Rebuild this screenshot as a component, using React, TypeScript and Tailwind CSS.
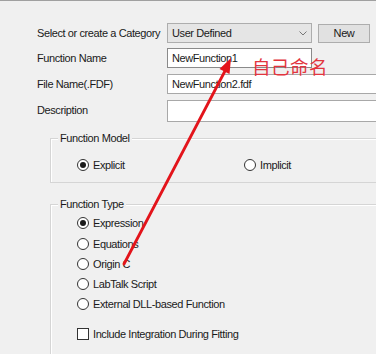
import React from "react";

const font = { fontFamily: '"Liberation Sans", Arial, sans-serif' };

function Radio({ checked, label }: { checked?: boolean; label: string }) {
  return (
    <div className="flex items-center h-[20px]">
      <span className="w-[12px] h-[12px] rounded-full border border-[#333333] bg-white flex items-center justify-center shrink-0">
        {checked && <span className="w-[6px] h-[6px] rounded-full bg-[#1a1a1a]" />}
      </span>
      <span className="ml-[4px] text-[11px] tracking-[-0.4px] text-[#1a1a1a] whitespace-nowrap">{label}</span>
    </div>
  );
}

export default function App() {
  return (
    <div
      className="relative w-[376px] h-[354px] overflow-hidden bg-[#f0f0f0] border-t border-[#a0a0a0]"
      style={font}
    >
      <div className="pt-[22px] flex flex-col text-[11px] tracking-[-0.4px] text-[#1a1a1a]">
        {/* Category row */}
        <div className="flex items-center h-[20px] pl-[37px]">
          <div className="w-[130px] whitespace-nowrap">Select or create a Category</div>
          <div className="w-[145px] h-[20px] bg-[#e5e5e5] border border-[#adadad] flex items-center justify-between pl-[4px] pr-[4px]">
            <span>User Defined</span>
            <svg width="8" height="5" viewBox="0 0 8 5">
              <path d="M0.5 0.5 L4 4 L7.5 0.5" fill="none" stroke="#777" strokeWidth="1" />
            </svg>
          </div>
          <div className="ml-[6px] w-[52px] h-[19px] bg-[#e1e1e1] border border-[#adadad] flex items-center justify-center">
            New
          </div>
        </div>
        {/* Function name */}
        <div className="flex items-center h-[20px] pl-[37px] mt-[5px]">
          <div className="w-[130px] whitespace-nowrap">Function Name</div>
          <div className="w-[145px] h-[20px] bg-white border border-[#8a8a8a] flex items-center pl-[4px]">
            NewFunction1
          </div>
        </div>
        {/* File name */}
        <div className="flex items-center h-[20px] pl-[37px] mt-[6px]">
          <div className="w-[130px] whitespace-nowrap">File Name(.FDF)</div>
          <div className="flex-1 h-[20px] bg-white border border-[#a8a8a8] border-r-0 flex items-center pl-[4px]">
            NewFunction2.fdf
          </div>
        </div>
        {/* Description */}
        <div className="flex items-start h-[22px] pl-[37px] mt-[6px]">
          <div className="w-[130px] whitespace-nowrap leading-[20px]">Description</div>
          <div className="flex-1 h-[22px] bg-white border border-[#a8a8a8] border-r-0" />
        </div>

        {/* Function Model group */}
        <div className="relative ml-[50px] mt-[16px] h-[45px] border border-r-0 border-[#d5d5d5] shadow-[inset_1px_1px_0_#ffffff]">
          <span className="absolute left-[7px] -top-[8px] px-[2px] bg-[#f0f0f0] leading-[14px]">Function Model</span>
          <div className="flex items-center pl-[26px] pt-[16px]">
            <div className="w-[167px]">
              <Radio checked label="Explicit" />
            </div>
            <Radio label="Implicit" />
          </div>
        </div>

        {/* Function Type group */}
        <div className="relative ml-[50px] mt-[21px] h-[160px] border border-r-0 border-[#d5d5d5] shadow-[inset_1px_1px_0_#ffffff]">
          <span className="absolute left-[7px] -top-[8px] px-[2px] bg-[#f0f0f0] leading-[14px]">Function Type</span>
          <div className="flex flex-col pl-[26px] pt-[8px]">
            <Radio checked label="Expression" />
            <div className="mt-[1px]">
              <Radio label="Equations" />
            </div>
            <Radio label="Origin C" />
            <Radio label="LabTalk Script" />
            <Radio label="External DLL-based Function" />
            <div className="flex items-center h-[20px] mt-[10px]">
              <span className="w-[12px] h-[12px] border border-[#333333] bg-white shrink-0" />
              <span className="ml-[4px] whitespace-nowrap">Include Integration During Fitting</span>
            </div>
          </div>
        </div>
      </div>

      {/* Annotation overlay */}
      <svg className="absolute left-0 top-0 pointer-events-none" width="376" height="354" viewBox="0 0 376 354">
        <line x1="124" y1="263" x2="225" y2="70" stroke="#e3141b" strokeWidth="2.8" strokeLinecap="round" />
        <polygon points="231,57 229.5,73 219.5,68" fill="#e3141b" />
      </svg>
      <span
        className="absolute left-[252px] top-[54px] text-[18.5px] leading-[22px] tracking-[0.5px] text-[#e2353e]"
        style={{ fontFamily: '"Noto Sans CJK SC", sans-serif' }}
      >
        自己命名
      </span>
    </div>
  );
}
